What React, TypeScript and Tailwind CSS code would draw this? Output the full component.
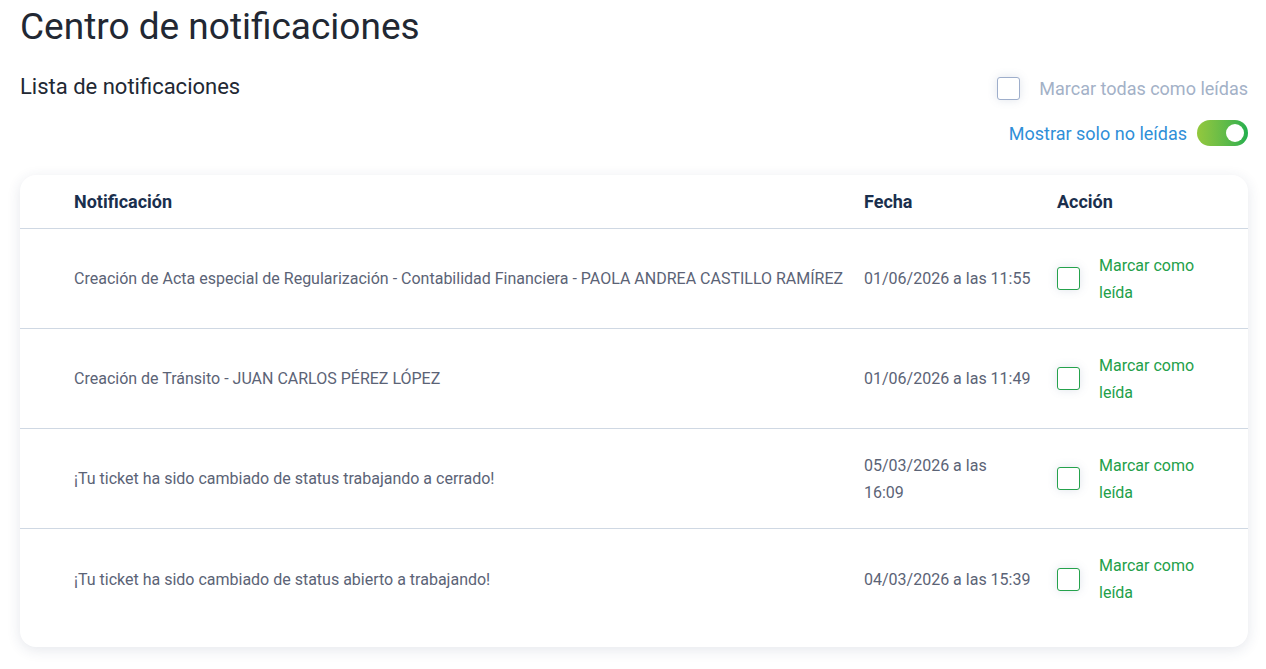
import { useState } from 'react';

type Notif = { id: number; text: string; date: string };

// la fecha del tercer aviso aparece partida en dos líneas en la vista original
const NOTIFS: Notif[] = [
  { id: 1, text: 'Creación de Acta especial de Regularización - Contabilidad Financiera - PAOLA ANDREA CASTILLO RAMÍREZ', date: '01/06/2026 a las 11:55' },
  { id: 2, text: 'Creación de Tránsito  - JUAN CARLOS PÉREZ LÓPEZ', date: '01/06/2026 a las 11:49' },
  { id: 3, text: '¡Tu ticket ha sido cambiado de status trabajando a cerrado!', date: '05/03/2026 a las\n16:09' },
  { id: 4, text: '¡Tu ticket ha sido cambiado de status abierto a trabajando!', date: '04/03/2026 a las 15:39' },
];

function Box({ tone }: { tone: 'green' | 'gray' }) {
  return (
    <span
      className={
        'inline-block h-[23px] w-[23px] shrink-0 rounded-[3px] border bg-white shadow-[0_0_10px_rgba(90,110,150,0.18)] ' +
        (tone === 'green' ? 'border-[#25a24c]' : 'border-[#9eaecb]')
      }
    />
  );
}

export default function App() {
  const [onlyUnread, setOnlyUnread] = useState(true);

  return (
    <div className="min-h-screen bg-white pl-[20px] pr-[18px] pb-6 font-['Roboto',sans-serif] text-[#5b6376]">
      {/* Header */}
      <h1 className="pt-[4px] text-[37px] font-normal leading-[46px] text-[#222833]">Centro de notificaciones</h1>

      <div className="mt-[22px] flex items-start justify-between">
        <h2 className="text-[22px] leading-[30px] text-[#222833]">Lista de notificaciones</h2>
        <div className="flex flex-col items-end gap-[15px] pt-px">
          <label className="flex h-[30px] items-center gap-[19px] text-[18px] text-[#a3b1c7]">
            <Box tone="gray" />
            Marcar todas como leídas
          </label>
          <div className="flex h-[30px] items-center gap-[10px] text-[18px] text-[#2f8fd8]">
            Mostrar solo no leídas
            <button
              onClick={() => setOnlyUnread(v => !v)}
              className="relative h-[26px] w-[51px] rounded-full bg-gradient-to-r from-[#93c83d] to-[#1eaf4e]"
            >
              <span
                className={
                  'absolute top-[4px] h-[18px] w-[18px] rounded-full bg-white ' +
                  (onlyUnread ? 'right-[4px]' : 'left-[4px]')
                }
              />
            </button>
          </div>
        </div>
      </div>

      {/* Table card */}
      <div className="mt-[27px] rounded-[16px] bg-white pb-[18px] shadow-[0_3px_14px_rgba(40,60,100,0.12)]">
        <div className="grid h-[54px] grid-cols-[790px_193px_1fr] items-center border-b border-[#cfd8e3] pl-[54px] text-[18px] font-bold text-[#1a2f4d]">
          <span>Notificación</span>
          <span>Fecha</span>
          <span>Acción</span>
        </div>
        {NOTIFS.map((n, i) => (
          <div
            key={n.id}
            className={
              'grid h-[100px] grid-cols-[790px_193px_1fr] items-center pl-[54px] text-[16px] leading-[27px] ' +
              (i < NOTIFS.length - 1 ? 'border-b border-[#cfd8e3]' : '')
            }
          >
            <span className="pr-4">{n.text}</span>
            <span className="whitespace-pre-line">{n.date}</span>
            <div className="flex items-center gap-[19px]">
              <Box tone="green" />
              <span className="w-[100px] text-[#23a04a]">Marcar como leída</span>
            </div>
          </div>
        ))}
      </div>
    </div>
  );
}
